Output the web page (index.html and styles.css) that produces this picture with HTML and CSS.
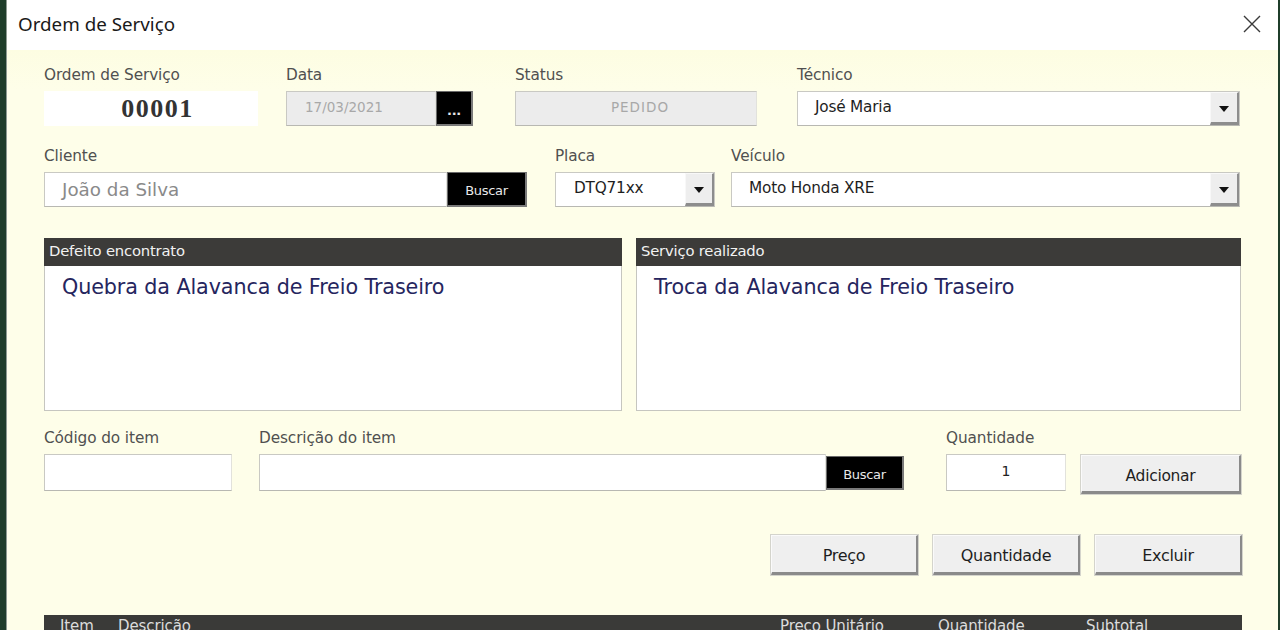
FILE: index.html
```html
<!DOCTYPE html>
<html lang="pt-BR">
<head>
<meta charset="utf-8">
<title>Ordem de Serviço</title>
<link rel="stylesheet" href="styles.css">
</head>
<body>
<div class="window">
  <div class="titlebar">
    <span class="title">Ordem de Serviço</span>
    <svg class="close" width="20" height="20" viewBox="0 0 20 20"><path d="M2 2 L18 18 M18 2 L2 18" stroke="#3a3a3a" stroke-width="1.4" fill="none"/></svg>
  </div>
  <div class="form">
    <div class="row row1">
      <div class="field f-os">
        <label class="lbl">Ordem de Serviço</label>
        <div class="osnum">00001</div>
      </div>
      <div class="field f-data">
        <label class="lbl">Data</label>
        <div class="ctrl">
          <div class="input disabled date">17/03/2021</div>
          <div class="btn-black dots">...</div>
        </div>
      </div>
      <div class="field f-status">
        <label class="lbl">Status</label>
        <div class="input disabled center status">PEDIDO</div>
      </div>
      <div class="field f-tec">
        <label class="lbl">Técnico</label>
        <div class="combo"><span class="val">José Maria</span><span class="arrow"><i></i></span></div>
      </div>
    </div>

    <div class="row row2">
      <div class="field f-cli">
        <label class="lbl">Cliente</label>
        <div class="ctrl">
          <div class="input cliente">João da Silva</div>
          <div class="btn-black buscar">Buscar</div>
        </div>
      </div>
      <div class="field f-placa">
        <label class="lbl">Placa</label>
        <div class="combo"><span class="val">DTQ71xx</span><span class="arrow"><i></i></span></div>
      </div>
      <div class="field f-veic">
        <label class="lbl">Veículo</label>
        <div class="combo"><span class="val">Moto Honda XRE</span><span class="arrow"><i></i></span></div>
      </div>
    </div>

    <div class="row memos">
      <div class="memo m-left">
        <div class="memo-head">Defeito encontrato</div>
        <div class="memo-body">Quebra da Alavanca de Freio Traseiro</div>
      </div>
      <div class="memo m-right">
        <div class="memo-head">Serviço realizado</div>
        <div class="memo-body">Troca da Alavanca de Freio Traseiro</div>
      </div>
    </div>

    <div class="row row3">
      <div class="field f-cod">
        <label class="lbl">Código do item</label>
        <div class="input tall"></div>
      </div>
      <div class="field f-desc">
        <label class="lbl">Descrição do item</label>
        <div class="ctrl">
          <div class="input tall desc"></div>
          <div class="btn-black buscar2">Buscar</div>
        </div>
      </div>
      <div class="field f-qtd">
        <label class="lbl">Quantidade</label>
        <div class="input tall center qtd">1</div>
      </div>
      <div class="field f-add">
        <label class="lbl">&nbsp;</label>
        <div class="btn-gray add">Adicionar</div>
      </div>
    </div>

    <div class="row actions">
      <div class="btn-gray act">Preço</div>
      <div class="btn-gray act">Quantidade</div>
      <div class="btn-gray act">Excluir</div>
    </div>

    <div class="grid-head">
      <span class="c-item">Item</span>
      <span class="c-desc">Descrição</span>
      <span class="c-preco">Preço Unitário</span>
      <span class="c-qtd">Quantidade</span>
      <span class="c-sub">Subtotal</span>
    </div>
  </div>
</div>
</body>
</html>
```

FILE: styles.css
```css
html, body {
  margin: 0;
  padding: 0;
  height: 630px;
  overflow: hidden;
  background: #1f3d2a;
}

.window {
  margin-left: 6px;
  width: 1271px;
  height: 630px;
  border-left: 1px solid #8e9a92;
  background: #fefee8;
  font-family: "DejaVu Sans", sans-serif;
  color: #4a4a4a;
}

.titlebar {
  height: 50px;
  background: #ffffff;
  display: flex;
  align-items: center;
  justify-content: space-between;
  padding: 0 16px 0 11px;
}

.title {
  font-family: "Noto Sans", "Open Sans", sans-serif;
  font-size: 18.8px;
  color: #1a1a1a;
  margin-top: -3px;
}

.close {
  margin-top: -3px;
}

.form {
  padding: 17px 36px 0 37px;
  background: linear-gradient(#fdfde2, #fefee9 40px);
}

.row {
  display: flex;
}

.field {
  display: flex;
  flex-direction: column;
}

.lbl {
  font-size: 15.3px;
  line-height: 16px;
  height: 16px;
  margin-bottom: 8px;
  color: #505050;
  white-space: nowrap;
  letter-spacing: -0.1px;
}

.ctrl {
  display: flex;
}

.input {
  box-sizing: border-box;
  height: 35px;
  background: #ffffff;
  border: 1px solid #c9c9c3;
  border-right-color: #e2e2dc;
  border-bottom-color: #b8b8b2;
  display: flex;
  align-items: center;
  font-size: 14px;
  color: #222;
}

.input.disabled {
  background: #ececec;
  color: #a8a8a8;
  font-size: 13.5px;
  padding-bottom: 3px;
}

.input.center {
  justify-content: center;
}

.input.tall {
  height: 37px;
}

/* Row 1 */
.f-os { width: 214px; }
.osnum {
  box-sizing: border-box;
  height: 35px;
  background: #ffffff;
  display: flex;
  align-items: center;
  justify-content: center;
  font-family: "Liberation Serif", serif;
  font-weight: bold;
  font-size: 26px;
  color: #333;
  letter-spacing: 1.5px;
  padding: 1px 0 0 13px;
}

.f-data { margin-left: 28px; }
.date { width: 150px; padding-left: 18px; }
.dots {
  width: 37px;
  height: 35px;
  font-size: 11px;
  font-weight: bold;
  padding-top: 4px;
}

.f-status { margin-left: 42px; width: 242px; }
.f-status .input { width: 242px; }
.status { letter-spacing: 1px; padding-left: 8px; }

.f-tec { margin-left: 40px; width: 443px; }

.combo {
  box-sizing: border-box;
  height: 35px;
  background: #ffffff;
  border: 1px solid #c9c9c3;
  border-bottom-color: #b8b8b2;
  display: flex;
  align-items: stretch;
  font-size: 15.3px;
  color: #1e1e1e;
}

.combo .val {
  flex: 1;
  display: flex;
  align-items: center;
  padding-left: 17px;
  padding-bottom: 3px;
  letter-spacing: -0.2px;
}

.combo .arrow {
  box-sizing: border-box;
  width: 29px;
  background: #eeeeee;
  border-left: 1px solid #f8f8f8;
  border-top: 1px solid #f8f8f8;
  border-right: 2px solid #8d8d8d;
  border-bottom: 3px solid #8d8d8d;
  display: flex;
  align-items: center;
  justify-content: center;
  padding-top: 2px;
}

.combo .arrow i {
  display: block;
  width: 0;
  height: 0;
  border-left: 5px solid transparent;
  border-right: 5px solid transparent;
  border-top: 6px solid #111;
}

.btn-black {
  box-sizing: border-box;
  background: #000;
  color: #e8e8e8;
  border: 1px solid #6a6a6a;
  border-right: 2px solid #7a7a7a;
  border-bottom: 2px solid #7a7a7a;
  display: flex;
  align-items: center;
  justify-content: center;
  font-size: 13px;
  letter-spacing: -0.3px;
}

/* Row 2 */
.row2 { margin-top: 22px; }
.f-cli .cliente {
  width: 403px;
  padding-left: 17px;
  font-size: 18.3px;
  color: #8a8a8a;
}
.buscar {
  width: 80px;
  height: 35px;
  padding-top: 3px;
}
.f-placa { margin-left: 28px; width: 160px; }
.f-placa .combo .val { padding-left: 18px; }
.f-veic { margin-left: 16px; width: 509px; }

/* Memos */
.memos {
  margin-top: 31px;
  height: 173px;
  gap: 14px;
}
.memo {
  display: flex;
  flex-direction: column;
  box-sizing: border-box;
}
.m-left { width: 578px; }
.m-right { width: 605px; }
.memo-head {
  height: 28px;
  background: #3c3b39;
  color: #f2f2f2;
  font-size: 14.8px;
  line-height: 25px;
  padding-left: 5px;
  letter-spacing: -0.2px;
}
.memo-body {
  flex: 1;
  background: #fff;
  border: 1px solid #c6c6c0;
  border-top: none;
  padding: 9px 0 0 17px;
  font-size: 20.7px;
  color: #25255e;
  letter-spacing: -0.1px;
}

/* Row 3 */
.row3 { margin-top: 19px; }
.f-cod { width: 188px; }
.f-desc { margin-left: 27px; }
.desc { width: 567px; }
.buscar2 {
  width: 78px;
  height: 34px;
  margin-top: 2px;
  padding-top: 3px;
}
.f-qtd { margin-left: 42px; width: 120px; }
.qtd { padding-bottom: 4px; font-size: 14px; }
.f-add { margin-left: 15px; width: 160px; }

.btn-gray {
  box-sizing: border-box;
  background: #efefef;
  border-top: 1px solid #fafafa;
  border-left: 1px solid #fafafa;
  border-right: 2px solid #8a8a8a;
  border-bottom: 3px solid #8a8a8a;
  box-shadow: 0 0 0 1px #d4d4cc;
  display: flex;
  align-items: center;
  justify-content: center;
  font-size: 15.5px;
  color: #1e1e1e;
  letter-spacing: -0.3px;
}
.add {
  height: 39px;
  margin-top: 1px;
  padding-top: 5px;
}

/* Actions */
.actions {
  margin-top: 41px;
  justify-content: flex-end;
  gap: 15px;
}
.act {
  width: 147px;
  height: 40px;
  padding-top: 3px;
  font-size: 16px;
}

/* Grid header */
.grid-head {
  margin-top: 40px;
  height: 30px;
  background: #3a3a38;
  color: #dcdcdc;
  font-size: 15px;
  position: relative;
  letter-spacing: -0.1px;
}
.grid-head span {
  position: absolute;
  top: 2px;
  white-space: nowrap;
}
.c-item { left: 16px; }
.c-desc { left: 74px; }
.c-preco { left: 736px; }
.c-qtd { left: 894px; }
.c-sub { left: 1042px; }
```
